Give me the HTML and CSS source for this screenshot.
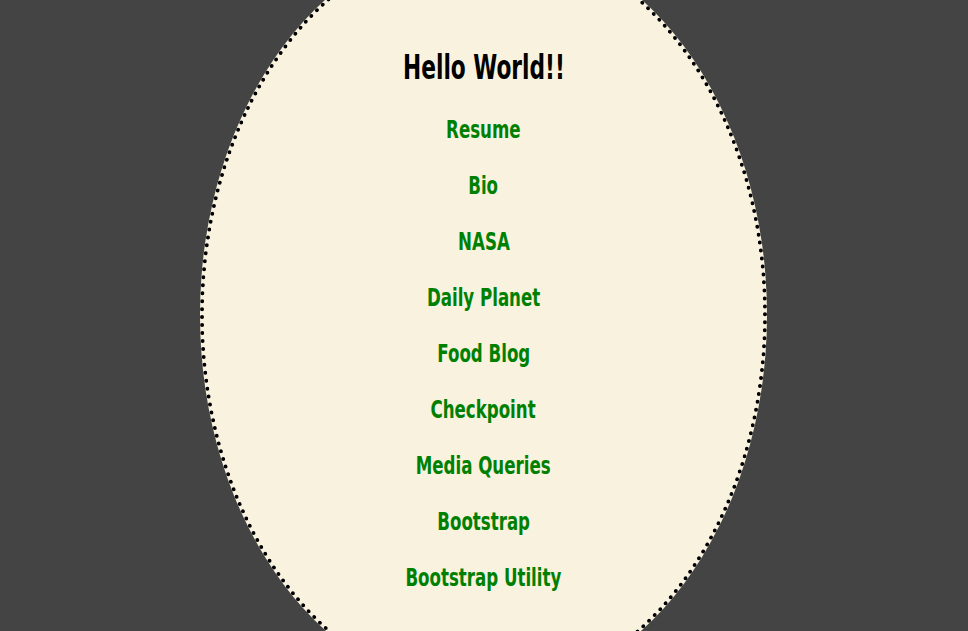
FILE: index.html
```html
<!DOCTYPE html>
<html>
<head>
<meta charset="utf-8">
<link rel="stylesheet" href="styles.css">
</head>
<body>
<main class="oval">
  <h1 class="title">Hello World!!</h1>
  <nav class="links">
    <a class="link" href="#">Resume</a>
    <a class="link" href="#">Bio</a>
    <a class="link" href="#">NASA</a>
    <a class="link" href="#">Daily Planet</a>
    <a class="link" href="#">Food Blog</a>
    <a class="link" href="#">Checkpoint</a>
    <a class="link" href="#">Media Queries</a>
    <a class="link" href="#">Bootstrap</a>
    <a class="link" href="#">Bootstrap Utility</a>
  </nav>
</main>
</body>
</html>
```

FILE: styles.css
```css
html, body {
  margin: 0;
  padding: 0;
  height: 100%;
  overflow: hidden;
}
body {
  background: #444444;
  font-family: "DejaVu Sans Condensed", "DejaVu Sans", sans-serif;
  display: flex;
  justify-content: center;
  align-items: flex-start;
}
.oval {
  box-sizing: border-box;
  width: 567px;
  height: 760px;
  margin-top: -65px;
  margin-left: -1px;
  background: #f8f2df;
  border: 4px dotted #000;
  border-radius: 50%;
  display: flex;
  flex-direction: column;
  align-items: center;
  padding-top: 108px;
}
.title {
  margin: 0;
  font-size: 34px;
  font-weight: bold;
  color: #000;
  line-height: 40px;
  display: inline-block;
  transform: scaleX(0.71);
}
.links {
  display: flex;
  flex-direction: column;
  align-items: center;
  gap: 22px;
  margin-top: 26px;
}
.link {
  display: inline-block;
  font-size: 25px;
  font-weight: bold;
  color: #008000;
  text-decoration: none;
  line-height: 34px;
  transform: scaleX(0.74);
}
```
